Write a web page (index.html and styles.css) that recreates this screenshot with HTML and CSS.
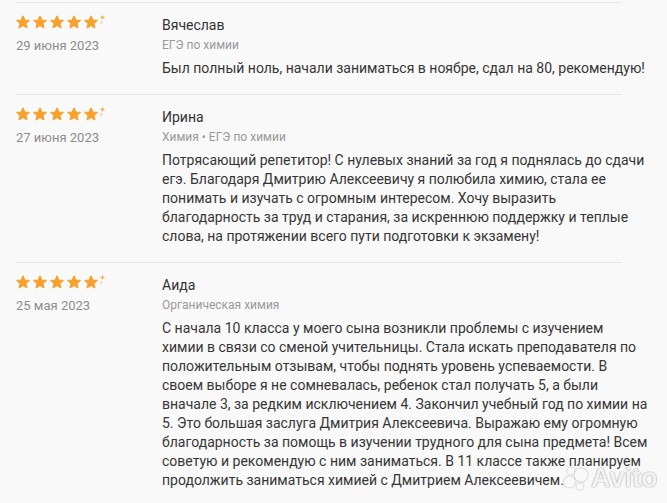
FILE: index.html
```html
<!DOCTYPE html>
<html lang="ru">
<head>
<meta charset="utf-8">
<title>Отзывы</title>
<link rel="stylesheet" href="styles.css">
</head>
<body>
<svg class="defs" width="0" height="0" aria-hidden="true">
  <symbol id="star" viewBox="0 0 14 14">
    <polygon points="7,1 8.8,5 13.2,5.4 9.9,8.4 10.9,12.8 7,10.5 3.1,12.8 4.1,8.4 0.8,5.4 5.2,5" fill="#f7a12c" stroke="#f7a12c" stroke-width="1.2" stroke-linejoin="round"/>
  </symbol>
  <symbol id="rating" viewBox="0 0 92 14">
    <use href="#star" x="0" y="0" width="14" height="14"/>
    <use href="#star" x="17" y="0" width="14" height="14"/>
    <use href="#star" x="34" y="0" width="14" height="14"/>
    <use href="#star" x="51" y="0" width="14" height="14"/>
    <use href="#star" x="68" y="0" width="14" height="14"/>
    <path d="M86.5 -0.2 L87.3 1.6 L89.1 2.4 L87.3 3.2 L86.5 5 L85.7 3.2 L83.9 2.4 L85.7 1.6 Z" fill="#f7b04a"/>
    <circle cx="85.3" cy="7.6" r="1.1" fill="#f9c27a"/>
  </symbol>
</svg>

<main class="reviews">
  <article class="review">
    <div class="meta">
      <svg class="stars" width="92" height="14"><use href="#rating"/></svg>
      <div class="date">29 июня 2023</div>
    </div>
    <div class="content">
      <div class="name">Вячеслав</div>
      <div class="tags">ЕГЭ по химии</div>
      <p class="text">Был полный ноль, начали заниматься в ноябре, сдал на 80, рекомендую!</p>
    </div>
  </article>

  <article class="review">
    <div class="meta">
      <svg class="stars" width="92" height="14"><use href="#rating"/></svg>
      <div class="date">27 июня 2023</div>
    </div>
    <div class="content">
      <div class="name">Ирина</div>
      <div class="tags">Химия • ЕГЭ по химии</div>
      <p class="text">Потрясающий репетитор! С нулевых знаний за год я поднялась до сдачи<br>
егэ. Благодаря Дмитрию Алексеевичу я полюбила химию, стала ее<br>
понимать и изучать с огромным интересом. Хочу выразить<br>
благодарность за труд и старания, за искреннюю поддержку и теплые<br>
слова, на протяжении всего пути подготовки к экзамену!</p>
    </div>
  </article>

  <article class="review">
    <div class="meta">
      <svg class="stars" width="92" height="14"><use href="#rating"/></svg>
      <div class="date">25 мая 2023</div>
    </div>
    <div class="content">
      <div class="name">Аида</div>
      <div class="tags">Органическая химия</div>
      <p class="text">С начала 10 класса у моего сына возникли проблемы с изучением<br>
химии в связи со сменой учительницы. Стала искать преподавателя по<br>
положительным отзывам, чтобы поднять уровень успеваемости. В<br>
своем выборе я не сомневалась, ребенок стал получать 5, а были<br>
вначале 3, за редким исключением 4. Закончил учебный год по химии на<br>
5. Это большая заслуга Дмитрия Алексеевича. Выражаю ему огромную<br>
благодарность за помощь в изучении трудного для сына предмета! Всем<br>
советую и рекомендую с ним заниматься. В 11 классе также планируем<br>
продолжить заниматься химией с Дмитрием Алексеевичем.</p>
    </div>
  </article>
</main>

<div class="next"></div>

<div class="watermark" aria-hidden="true">
  <svg class="wm-logo" width="26" height="24" viewBox="0 0 26 24">
    <circle cx="8" cy="5" r="3.3"/>
    <circle cx="18" cy="9" r="6.5"/>
    <circle cx="6.5" cy="16" r="5.3"/>
    <circle cx="17" cy="20.5" r="3.2"/>
  </svg>
  <span class="wm-text">Avito</span>
</div>
</body>
</html>
```

FILE: styles.css
```css
html, body {
  margin: 0;
  padding: 0;
}

body {
  background: #f9f9f9;
  font-family: Roboto, "Noto Sans", "Liberation Sans", sans-serif;
  color: #333;
  width: 667px;
  height: 503px;
  overflow: hidden;
  position: relative;
}

.defs {
  position: absolute;
  width: 0;
  height: 0;
}

.reviews {
  margin: 2px 0 0 16px;
  width: 606px;
  border-top: 1px solid #e7e7e7;
}

.review {
  display: flex;
  padding: 12px 0 16px;
  border-bottom: 1px solid #e7e7e7;
}

.meta {
  flex: none;
  width: 146px;
}

.stars {
  display: block;
}

.date {
  margin-top: 9px;
  font-size: 13px;
  line-height: 16px;
  color: #8d8d8d;
}

.content {
  flex: none;
  width: 505px;
}

.name {
  font-size: 14px;
  line-height: 20px;
  color: #333;
}

.tags {
  margin-top: 2px;
  font-size: 12px;
  line-height: 16px;
  color: #999;
}

.text {
  margin: 6px 0 0;
  font-size: 14px;
  line-height: 19px;
  color: #363636;
  white-space: nowrap;
}

.next {
  margin: 6px 0 0 16px;
  height: 4px;
  background: #eef0f4;
}

.watermark {
  position: absolute;
  left: 563px;
  top: 464px;
  display: flex;
  align-items: center;
  gap: 2px;
}

.wm-logo {
  fill: rgba(255, 255, 255, 0.92);
  filter: drop-shadow(0 0 1px rgba(0, 0, 0, 0.35));
}

.wm-text {
  font-family: "Liberation Sans", Arial, sans-serif;
  font-weight: bold;
  font-size: 27px;
  line-height: 28px;
  color: rgba(255, 255, 255, 0.92);
  text-shadow: 0 0 1px rgba(0, 0, 0, 0.45), 0 0 2px rgba(0, 0, 0, 0.15);
}
```
